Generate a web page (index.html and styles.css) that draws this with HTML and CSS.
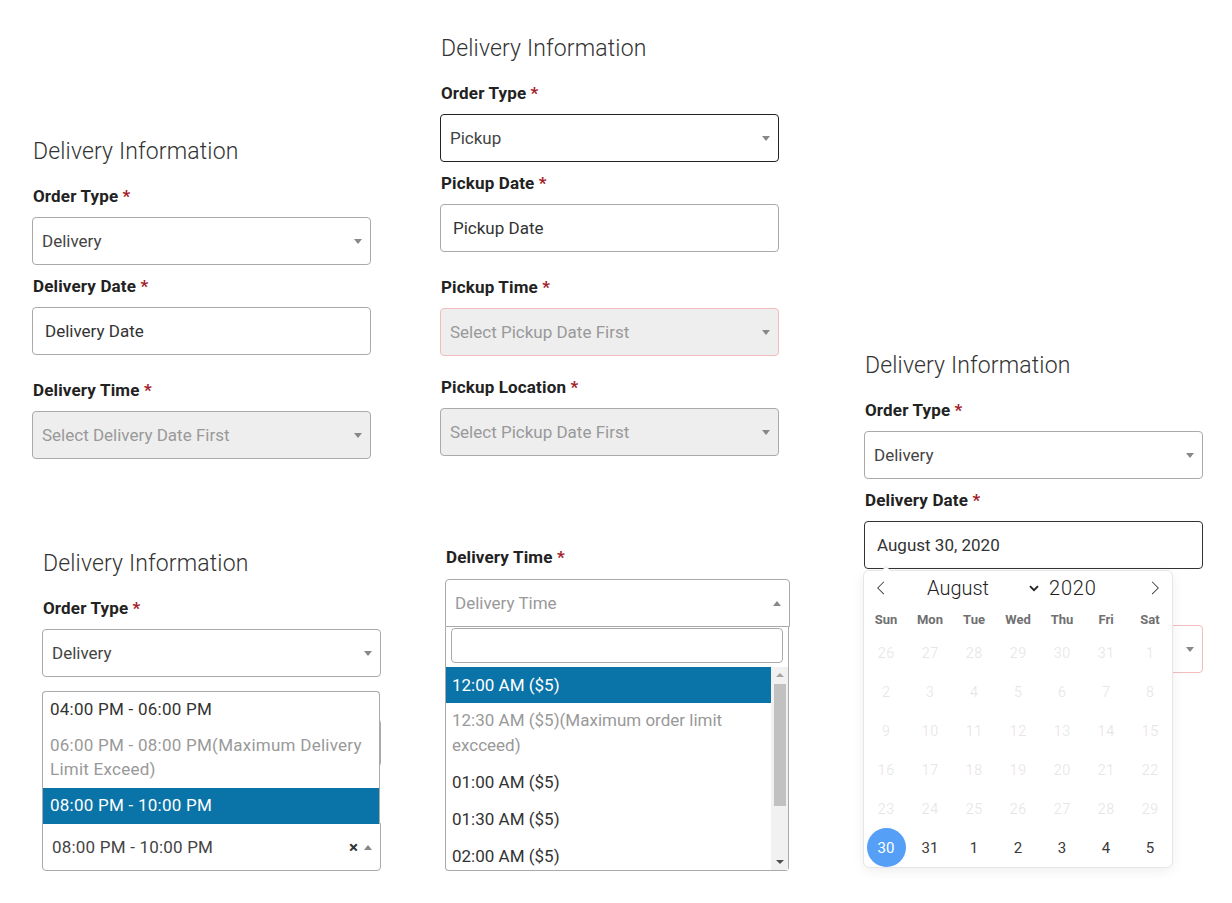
FILE: index.html
```html
<!DOCTYPE html>
<html lang="en">
<head>
<meta charset="utf-8">
<title>Delivery Information</title>
<link rel="stylesheet" href="styles.css">
</head>
<body>
<div class="canvas">

  <section class="panel panel-a">
    <h2 class="heading">Delivery Information</h2>
    <div class="label">Order Type <span class="req">*</span></div>
    <div class="field select"><span class="val">Delivery</span><span class="arrow"></span></div>
    <div class="label">Delivery Date <span class="req">*</span></div>
    <div class="field input">Delivery Date</div>
    <div class="label">Delivery Time <span class="req">*</span></div>
    <div class="field select disabled"><span class="val">Select Delivery Date First</span><span class="arrow"></span></div>
  </section>

  <section class="panel panel-b">
    <h2 class="heading">Delivery Information</h2>
    <div class="label">Order Type <span class="req">*</span></div>
    <div class="field select focused"><span class="val">Pickup</span><span class="arrow"></span></div>
    <div class="label">Pickup Date <span class="req">*</span></div>
    <div class="field input">Pickup Date</div>
    <div class="label">Pickup Time <span class="req">*</span></div>
    <div class="field select disabled error gap20"><span class="val">Select Pickup Date First</span><span class="arrow"></span></div>
    <div class="label">Pickup Location <span class="req">*</span></div>
    <div class="field select disabled"><span class="val">Select Pickup Date First</span><span class="arrow"></span></div>
  </section>

  <section class="panel panel-c">
    <h2 class="heading">Delivery Information</h2>
    <div class="label">Order Type <span class="req">*</span></div>
    <div class="field select"><span class="val">Delivery</span><span class="arrow"></span></div>
    <div class="label">Delivery Date <span class="req">*</span></div>
    <div class="date-wrap">
      <div class="field input dark">August 30, 2020</div>
      <div class="calendar">
        <div class="cal-head">
          <span class="nav"><svg width="14" height="14" viewBox="0 0 17 17"><path d="M5.207 8.471l7.146 7.147-0.707 0.707-7.854-7.854 7.854-7.854 0.707 0.707-7.146 7.147z" fill="#333"/></svg></span>
          <div class="cur-month">
            <span class="month">August</span>
            <svg class="chev" width="10" height="7" viewBox="0 0 10 7"><path d="M1 1.2l4 4 4-4" fill="none" stroke="#222" stroke-width="1.8"/></svg>
            <span class="year">2020</span>
          </div>
          <span class="nav"><svg width="14" height="14" viewBox="0 0 17 17"><path d="M13.207 8.472l-7.854 7.854-0.707-0.707 7.146-7.146-7.146-7.148 0.707-0.707 7.854 7.854z" fill="#333"/></svg></span>
        </div>
        <div class="weekdays">
          <span>Sun</span><span>Mon</span><span>Tue</span><span>Wed</span><span>Thu</span><span>Fri</span><span>Sat</span>
        </div>
        <div class="days">
          <span class="off">26</span><span class="off">27</span><span class="off">28</span><span class="off">29</span><span class="off">30</span><span class="off">31</span><span class="off">1</span>
          <span class="off">2</span><span class="off">3</span><span class="off">4</span><span class="off">5</span><span class="off">6</span><span class="off">7</span><span class="off">8</span>
          <span class="off">9</span><span class="off">10</span><span class="off">11</span><span class="off">12</span><span class="off">13</span><span class="off">14</span><span class="off">15</span>
          <span class="off">16</span><span class="off">17</span><span class="off">18</span><span class="off">19</span><span class="off">20</span><span class="off">21</span><span class="off">22</span>
          <span class="off">23</span><span class="off">24</span><span class="off">25</span><span class="off">26</span><span class="off">27</span><span class="off">28</span><span class="off">29</span>
          <span><i class="sel">30</i></span><span>31</span><span>1</span><span>2</span><span>3</span><span>4</span><span>5</span>
        </div>
      </div>
    </div>
    <div class="label covered">Delivery Time <span class="req">*</span></div>
    <div class="field select error"><span class="val covered">Select Delivery Date First</span><span class="arrow"></span></div>
  </section>

  <section class="panel panel-d">
    <h2 class="heading">Delivery Information</h2>
    <div class="label">Order Type <span class="req">*</span></div>
    <div class="field select"><span class="val">Delivery</span><span class="arrow"></span></div>
    <div class="label covered">Delivery Date <span class="req">*</span></div>
    <div class="field input"><span class="covered">Delivery Date</span></div>
    <div class="label covered">Delivery Time <span class="req">*</span></div>
    <div class="field select open-above">
      <ul class="dropdown above">
        <li class="opt">04:00 PM - 06:00 PM</li>
        <li class="opt dis">06:00 PM - 08:00 PM(Maximum Delivery Limit Exceed)</li>
        <li class="opt hl">08:00 PM - 10:00 PM</li>
      </ul>
      <span class="val wide">08:00 PM - 10:00 PM</span>
      <span class="clear">×</span>
      <span class="arrow up"></span>
    </div>
  </section>

  <section class="panel panel-e">
    <div class="label label-e">Delivery Time <span class="req">*</span></div>
    <div class="field select open-below"><span class="val ph">Delivery Time</span><span class="arrow up"></span></div>
    <div class="dropdown below">
      <div class="search"><div class="search-box"></div></div>
      <div class="results">
        <ul class="res-list">
          <li class="opt hl first">12:00 AM ($5)</li>
          <li class="opt dis">12:30 AM ($5)(Maximum order limit excceed)</li>
          <li class="opt">01:00 AM ($5)</li>
          <li class="opt">01:30 AM ($5)</li>
          <li class="opt">02:00 AM ($5)</li>
        </ul>
        <div class="scrollbar">
          <span class="sb-up"></span>
          <span class="sb-thumb"></span>
          <span class="sb-down"></span>
        </div>
      </div>
    </div>
  </section>

</div>
</body>
</html>
```

FILE: styles.css
```css
* { box-sizing: border-box; }

body {
  margin: 0;
  background: #fff;
  font-family: Roboto, "Liberation Sans", Arial, sans-serif;
}

.canvas {
  position: relative;
  width: 1232px;
  height: 903px;
  overflow: hidden;
}

.panel {
  position: absolute;
  display: flex;
  flex-direction: column;
  width: 339px;
}

.panel-a { left: 32px; top: 135px; }
.panel-b { left: 440px; top: 32px; }
.panel-c { left: 864px; top: 349px; }
.panel-d { left: 42px; top: 547px; }
.panel-e { left: 445px; top: 546px; width: 345px; }

.heading {
  margin: 0 0 18px;
  padding: 2px 0 0 1px;
  font-size: 23px;
  font-weight: 300;
  letter-spacing: 0.15px;
  line-height: 30px;
  color: #333;
}

.label {
  margin-bottom: 10px;
  padding-left: 1px;
  font-size: 17px;
  font-weight: 700;
  letter-spacing: 0.15px;
  line-height: 22px;
  color: #222;
}

.label-e { margin-bottom: 11px; }

.req { color: #a3202b; }

.covered { visibility: hidden; }

.field {
  position: relative;
  display: flex;
  align-items: center;
  height: 48px;
  border: 1px solid #aaa;
  border-radius: 4px;
  background: #fff;
  font-size: 17px;
  color: #444;
}

.select {
  padding: 0 24px 0 9px;
  margin-bottom: 10px;
}

.input {
  padding-left: 12px;
  margin-bottom: 24px;
  color: #333;
}

.arrow {
  position: absolute;
  right: 8px;
  top: 50%;
  margin-top: -2px;
  border-style: solid;
  border-width: 5px 4px 0 4px;
  border-color: #888 transparent transparent transparent;
}

.arrow.up {
  border-width: 0 4px 5px 4px;
  border-color: transparent transparent #888 transparent;
}

.disabled { background: #eee; color: #999; }
.focused { border-color: #222; }
.dark { border-color: #333; }
.error { border-color: #f2bcbc; }
.gap20 { margin-bottom: 20px; }

.val.ph { color: #999; }
.val.wide { letter-spacing: 0.2px; }

/* open select (panel D: dropdown above) */
.open-above {
  border-top-left-radius: 0;
  border-top-right-radius: 0;
  padding-left: 9px;
}

.clear {
  position: absolute;
  right: 22px;
  top: 50%;
  transform: translateY(-52%);
  font-size: 17px;
  font-weight: 700;
  color: #333;
}

.dropdown {
  margin: 0;
  padding: 0;
  list-style: none;
  background: #fff;
  border: 1px solid #aaa;
}

.dropdown.above {
  position: absolute;
  left: -1px;
  bottom: 100%;
  width: 338px;
  border-bottom: none;
  border-radius: 4px 4px 0 0;
  z-index: 2;
}

.dropdown.above .opt {
  padding: 5px 7px 7px;
  letter-spacing: 0.25px;
}

.opt {
  padding: 6px 7px;
  font-size: 17px;
  line-height: 24px;
  color: #333;
}

.opt.dis { color: #999; }
.opt.hl { background: #0a73a8; color: #fff; }

/* panel E: dropdown below */
.open-below {
  margin-bottom: 0;
  border-bottom-left-radius: 0;
  border-bottom-right-radius: 0;
}

.dropdown.below {
  border-top: none;
  border-radius: 0 0 4px 4px;
  width: 344px;
}

.search { padding: 1px 5px 4px 5px; }

.search-box {
  height: 35px;
  border: 1px solid #aaa;
  border-radius: 4px;
}

.results {
  display: flex;
  height: 203px;
  overflow: hidden;
}

.res-list {
  flex: 1;
  margin: 0;
  padding: 0;
  list-style: none;
}

.res-list .opt { padding: 5px 6px 7px; line-height: 25px; }
.res-list .opt.first { padding: 6px 6px 5px; }

.scrollbar {
  position: relative;
  width: 17px;
  background: #f1f1f1;
  display: flex;
  flex-direction: column;
  align-items: center;
}

.sb-up {
  margin-top: 6px;
  border-style: solid;
  border-width: 0 4px 4px 4px;
  border-color: transparent transparent #a3a3a3 transparent;
}

.sb-thumb {
  margin-top: 7px;
  width: 12px;
  height: 122px;
  background: #c1c1c1;
}

.sb-down {
  margin-top: auto;
  margin-bottom: 6px;
  border-style: solid;
  border-width: 4px 4px 0 4px;
  border-color: #505050 transparent transparent transparent;
}

/* calendar */
.date-wrap { position: relative; }

.calendar {
  position: absolute;
  left: 0;
  top: calc(100% - 22px);
  width: 308px;
  background: #fff;
  border-radius: 5px;
  box-shadow: 1px 0 0 #e6e6e6, -1px 0 0 #e6e6e6, 0 1px 0 #e6e6e6, 0 -1px 0 #e6e6e6, 0 3px 13px rgba(0, 0, 0, 0.08);
  z-index: 3;
}

.calendar::before,
.calendar::after {
  content: "";
  position: absolute;
  left: 22px;
  bottom: 100%;
  border: solid transparent;
}

.calendar::before { border-width: 5px; margin-left: -5px; border-bottom-color: #e6e6e6; }
.calendar::after { border-width: 4px; margin-left: -4px; border-bottom-color: #fff; }

.cal-head {
  display: flex;
  align-items: center;
  height: 34px;
}

.nav {
  width: 34px;
  height: 34px;
  display: flex;
  align-items: center;
  justify-content: center;
}

.cur-month {
  flex: 1;
  display: flex;
  align-items: center;
  padding-left: 29px;
  font-size: 20px;
  font-weight: 300;
  color: #222;
}

.month { width: 102px; }
.chev { margin-right: 10px; }
.year { letter-spacing: 0.8px; }

.weekdays {
  display: grid;
  grid-template-columns: repeat(7, 44px);
  height: 28px;
  align-items: center;
  text-align: center;
  font-size: 13px;
  font-weight: 700;
  color: #707070;
}

.days {
  display: grid;
  grid-template-columns: repeat(7, 44px);
  grid-auto-rows: 39px;
  font-size: 15px;
  color: #393939;
}

.days span {
  display: flex;
  align-items: center;
  justify-content: center;
}

.days .off { color: rgba(57, 57, 57, 0.12); }

.sel {
  display: flex;
  align-items: center;
  justify-content: center;
  width: 39px;
  height: 39px;
  border-radius: 50%;
  background: #569ff7;
  color: #fff;
  font-style: normal;
}
```
